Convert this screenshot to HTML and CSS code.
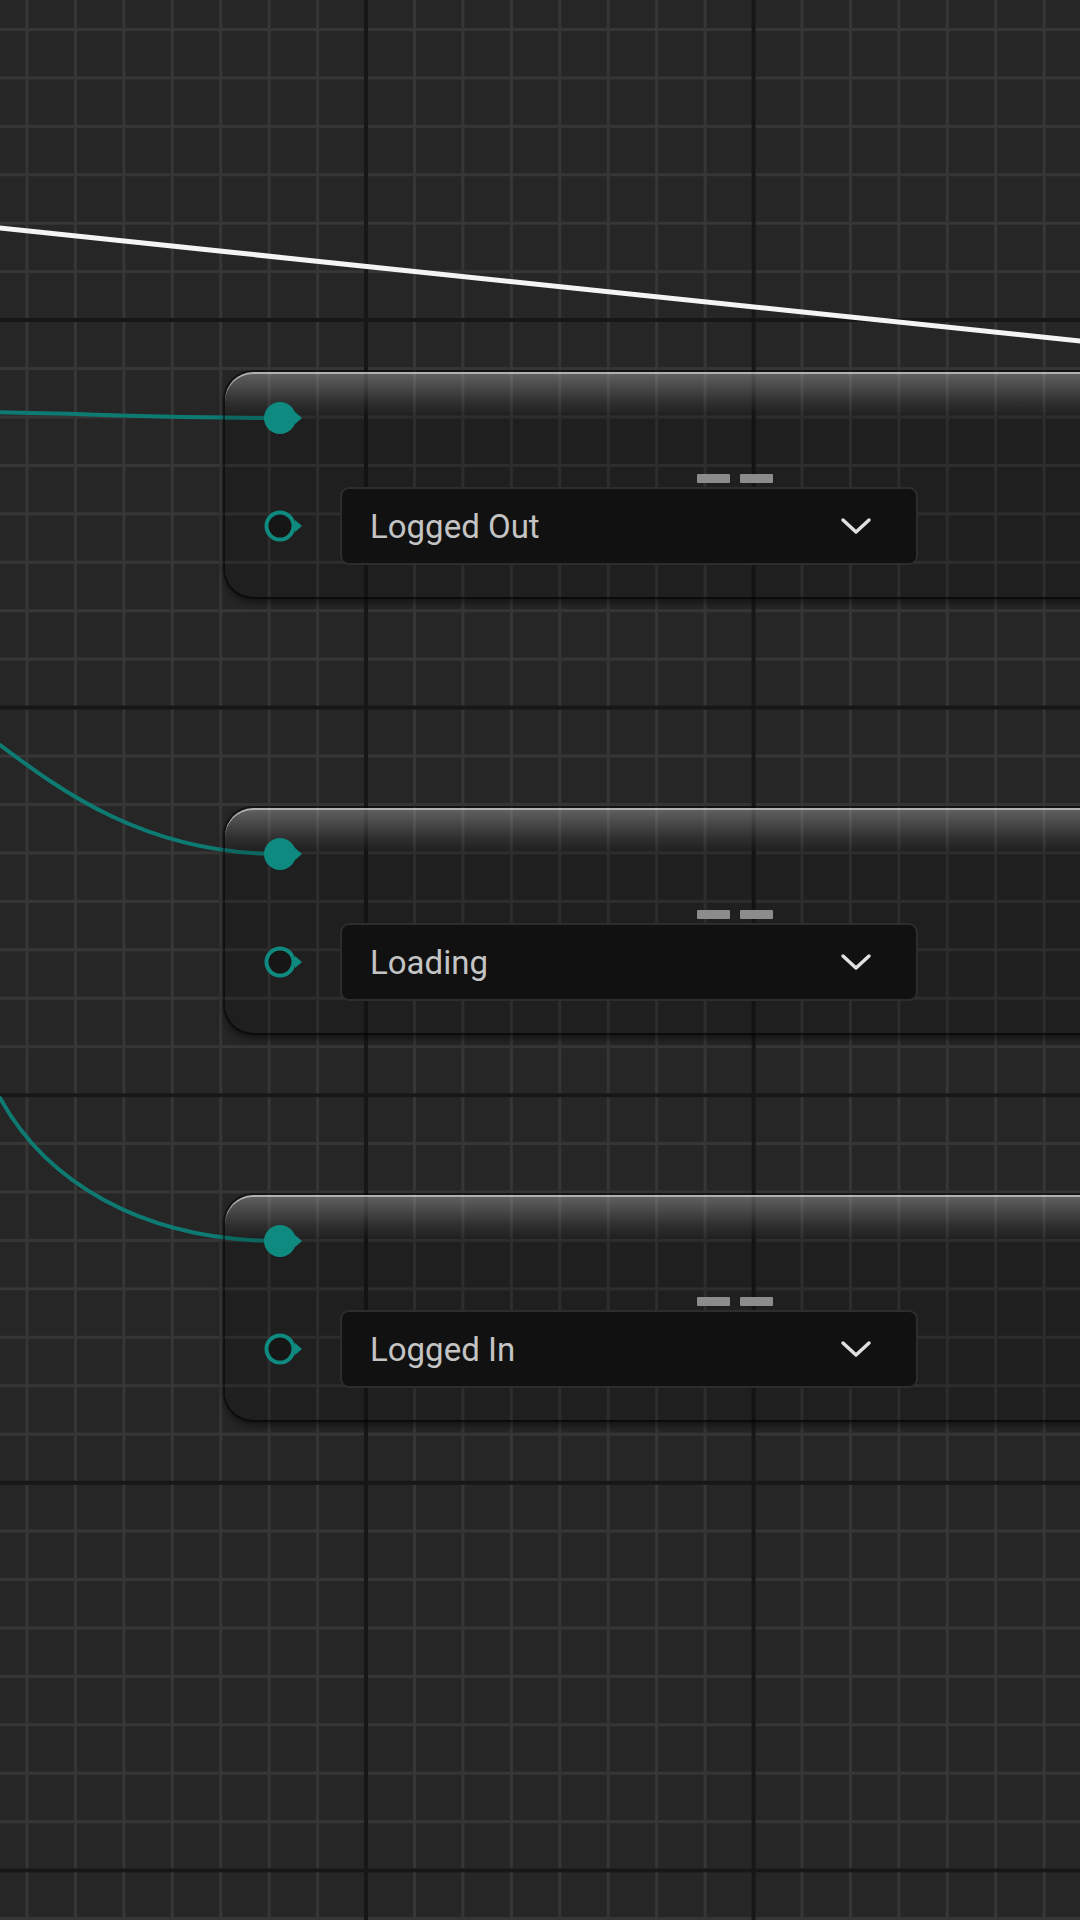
FILE: index.html
```html
<!DOCTYPE html>
<html lang="en">
<head>
  <meta charset="UTF-8" />
  <meta name="viewport" content="width=device-width, initial-scale=1.0" />
  <title>State graph</title>
  <link rel="stylesheet" href="styles.css">
</head>
<body>

  <div class="canvas">

    <!-- Conexiones entre nodos -->
    <svg class="wires" width="1080" height="1920" viewBox="0 0 1080 1920">
      <path class="wire wire-exec" d="M -20 226 C 300 259, 700 304, 1100 343" />
      <path class="wire wire-data" d="M -20 412 C 80 413, 150 418, 280 418" />
      <path class="wire wire-data" d="M 0 745 C 60 790, 145 854, 280 854" />
      <path class="wire wire-data" d="M 0 1098 C 45 1180, 140 1241, 280 1241" />
    </svg>

    <div class="node node-1">
      <div class="pin-row">
        <svg class="pin" width="48" height="32" viewBox="0 0 48 32">
          <circle cx="16" cy="16" r="16" fill="#0f8a80" />
          <path d="M31 10 L38 16 L31 22 Z" fill="#0f8a80" />
        </svg>
      </div>
      <div class="grip"><span></span><span></span></div>
      <div class="pin-row">
        <svg class="pin" width="48" height="32" viewBox="0 0 48 32">
          <circle cx="16" cy="16" r="13.5" fill="#161616" stroke="#0f8a80" stroke-width="4" />
          <path d="M31 10 L38 16 L31 22 Z" fill="#0f8a80" />
        </svg>
        <div class="select">
          <span>Logged Out</span>
          <svg class="chevron" width="32" height="20" viewBox="0 0 32 20">
            <path d="M3 4 L16 16 L29 4" />
          </svg>
        </div>
      </div>
    </div>

    <div class="node node-2">
      <div class="pin-row">
        <svg class="pin" width="48" height="32" viewBox="0 0 48 32">
          <circle cx="16" cy="16" r="16" fill="#0f8a80" />
          <path d="M31 10 L38 16 L31 22 Z" fill="#0f8a80" />
        </svg>
      </div>
      <div class="grip"><span></span><span></span></div>
      <div class="pin-row">
        <svg class="pin" width="48" height="32" viewBox="0 0 48 32">
          <circle cx="16" cy="16" r="13.5" fill="#161616" stroke="#0f8a80" stroke-width="4" />
          <path d="M31 10 L38 16 L31 22 Z" fill="#0f8a80" />
        </svg>
        <div class="select">
          <span>Loading</span>
          <svg class="chevron" width="32" height="20" viewBox="0 0 32 20">
            <path d="M3 4 L16 16 L29 4" />
          </svg>
        </div>
      </div>
    </div>

    <div class="node node-3">
      <div class="pin-row">
        <svg class="pin" width="48" height="32" viewBox="0 0 48 32">
          <circle cx="16" cy="16" r="16" fill="#0f8a80" />
          <path d="M31 10 L38 16 L31 22 Z" fill="#0f8a80" />
        </svg>
      </div>
      <div class="grip"><span></span><span></span></div>
      <div class="pin-row">
        <svg class="pin" width="48" height="32" viewBox="0 0 48 32">
          <circle cx="16" cy="16" r="13.5" fill="#161616" stroke="#0f8a80" stroke-width="4" />
          <path d="M31 10 L38 16 L31 22 Z" fill="#0f8a80" />
        </svg>
        <div class="select">
          <span>Logged In</span>
          <svg class="chevron" width="32" height="20" viewBox="0 0 32 20">
            <path d="M3 4 L16 16 L29 4" />
          </svg>
        </div>
      </div>
    </div>

  </div>

</body>
</html>
```

FILE: styles.css
```css
body {
  margin: 0;
  font-family: Roboto, "Noto Sans", sans-serif;
  background: #262626;
  overflow: hidden;
}

/* Lienzo con rejilla: líneas finas cada celda y gruesas cada 8 */
.canvas {
  position: relative;
  width: 1080px;
  height: 1920px;
  overflow: hidden;
  background-color: #262626;
  background-image:
    linear-gradient(90deg, #171717 4px, transparent 4px),
    linear-gradient(#171717 4px, transparent 4px),
    linear-gradient(90deg, #363636 3px, transparent 3px),
    linear-gradient(#363636 3px, transparent 3px);
  background-size:
    387.6px 100%,
    100% 387.6px,
    48.45px 100%,
    100% 48.45px;
  background-position:
    364px 0,
    0 318px,
    25.5px 0,
    0 28px;
}

.wires {
  position: absolute;
  top: 0;
  left: 0;
}

.wire {
  fill: none;
  stroke-linecap: round;
}

.wire-exec {
  stroke: #f4f4f4;
  stroke-width: 5;
}

.wire-data {
  stroke: #0e7b73;
  stroke-width: 4;
}

/* Nodos */
.node {
  position: absolute;
  left: 225px;
  width: 1019px;
  height: 225px;
  box-sizing: border-box;
  padding: 30px 0 0 39px;
  display: flex;
  flex-direction: column;
  border-radius: 28px;
  background-color: rgba(0, 0, 0, 0.16);
  background-image: linear-gradient(rgba(255, 255, 255, 0.3), rgba(255, 255, 255, 0.07) 30px, rgba(255, 255, 255, 0) 44px);
  box-shadow:
    inset 0 2px 0 rgba(255, 255, 255, 0.5),
    0 0 0 2px rgba(0, 0, 0, 0.45),
    0 5px 9px rgba(0, 0, 0, 0.55);
}

.node-1 { top: 372px; }
.node-2 { top: 808px; }
.node-3 { top: 1195px; }

.pin-row {
  display: flex;
  align-items: center;
}

.pin {
  flex: none;
  display: block;
}

.grip {
  display: flex;
  justify-content: center;
  gap: 10px;
  height: 9px;
  margin: 40px 0 4px -39px;
}

.grip span {
  width: 33px;
  height: 9px;
  background: #8c8c8c;
  border-radius: 1px;
}

.select {
  width: 578px;
  height: 78px;
  box-sizing: border-box;
  margin-left: 28px;
  padding: 0 44px 0 28px;
  display: flex;
  align-items: center;
  justify-content: space-between;
  background: #111;
  border: 2px solid #2d2d2d;
  border-radius: 9px;
  color: #c4c4c4;
  font-size: 33px;
}

.chevron path {
  fill: none;
  stroke: #e0e0e0;
  stroke-width: 3.5;
  stroke-linecap: round;
  stroke-linejoin: round;
}
```
